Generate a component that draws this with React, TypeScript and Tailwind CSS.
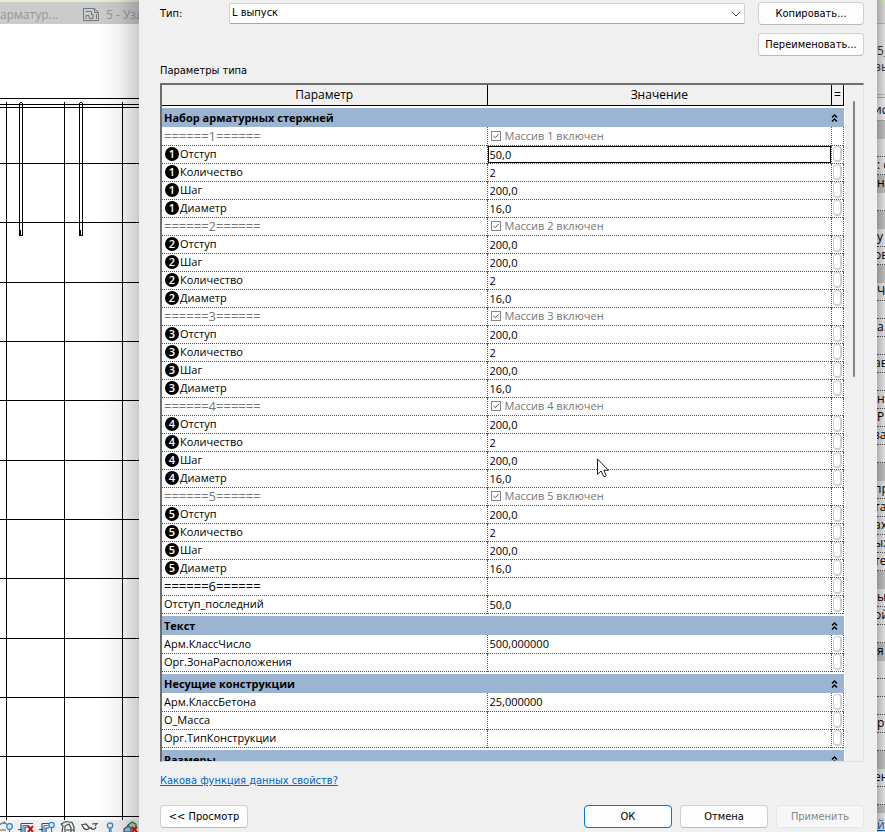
import { useState } from 'react';

interface Param {
  name: string;
  value?: string;
  badge?: number;
  check?: string;
  muted?: boolean;
  active?: boolean;
}

interface Group {
  title: string;
  params: Param[];
}

interface StripRow {
  text?: string;
  dark?: boolean;
}

const GROUPS: Group[] = [
  {
    title: 'Набор арматурных стержней',
    params: [
      { name: '======1======', check: 'Массив 1 включен', muted: true },
      { badge: 1, name: 'Отступ', value: '50,0', active: true },
      { badge: 1, name: 'Количество', value: '2' },
      { badge: 1, name: 'Шаг', value: '200,0' },
      { badge: 1, name: 'Диаметр', value: '16,0' },
      { name: '======2======', check: 'Массив 2 включен', muted: true },
      { badge: 2, name: 'Отступ', value: '200,0' },
      { badge: 2, name: 'Шаг', value: '200,0' },
      { badge: 2, name: 'Количество', value: '2' },
      { badge: 2, name: 'Диаметр', value: '16,0' },
      { name: '======3======', check: 'Массив 3 включен', muted: true },
      { badge: 3, name: 'Отступ', value: '200,0' },
      { badge: 3, name: 'Количество', value: '2' },
      { badge: 3, name: 'Шаг', value: '200,0' },
      { badge: 3, name: 'Диаметр', value: '16,0' },
      { name: '======4======', check: 'Массив 4 включен', muted: true },
      { badge: 4, name: 'Отступ', value: '200,0' },
      { badge: 4, name: 'Количество', value: '2' },
      { badge: 4, name: 'Шаг', value: '200,0' },
      { badge: 4, name: 'Диаметр', value: '16,0' },
      { name: '======5======', check: 'Массив 5 включен', muted: true },
      { badge: 5, name: 'Отступ', value: '200,0' },
      { badge: 5, name: 'Количество', value: '2' },
      { badge: 5, name: 'Шаг', value: '200,0' },
      { badge: 5, name: 'Диаметр', value: '16,0' },
      { name: '======6======', value: '' },
      { name: 'Отступ_последний', value: '50,0' },
    ],
  },
  {
    title: 'Текст',
    params: [
      { name: 'Арм.КлассЧисло', value: '500,000000' },
      { name: 'Орг.ЗонаРасположения', value: '' },
    ],
  },
  {
    title: 'Несущие конструкции',
    params: [
      { name: 'Арм.КлассБетона', value: '25,000000' },
      { name: 'О_Масса', value: '' },
      { name: 'Орг.ТипКонструкции', value: '' },
    ],
  },
  { title: 'Размеры', params: [] },
];

const STRIP: StripRow[] = [
  { dark: true }, {}, { text: ': с' }, { text: 'н', dark: true }, {}, { dark: true },
  { text: 'у' }, { text: 'ов' }, { dark: true }, { text: 'Ч' }, {}, { text: 'а.' }, {},
  { text: 'ав' }, {}, { text: 'н' }, { text: 'Р' }, { text: 'за' }, {}, { dark: true },
  { text: 'пр' }, { text: 'та' }, { text: 'ах' }, { text: 'ых' }, { text: 'те' }, { dark: true },
  { text: 'ы' }, { text: 'ой' }, {}, { text: 'я', dark: true }, {}, {}, {}, { text: 'р' }, {},
  { dark: true }, { text: 'ен' }, {},
];

const GRID_Y = [139, 198, 258, 317, 376, 436, 495, 554, 614, 673, 732, 792];
const GRID_X = [6, 64, 122];
const BARS_X = [19, 79];

const BUTTON =
  'h-[23px] rounded border border-[#d0d0d0] border-b-[#bababa] bg-[#fdfdfd] text-center leading-5 text-black';

function Drawing() {
  return (
    <svg className="block h-full w-full" fill="none" stroke="#000" shapeRendering="crispEdges">
      {[74, 80, 83, ...GRID_Y].map((y) => (
        <line key={y} x1="0" x2="100%" y1={y + 0.5} y2={y + 0.5} />
      ))}
      {GRID_X.map((x) => (
        <line key={x} x1={x + 0.5} x2={x + 0.5} y1="78" y2="796" />
      ))}
      {BARS_X.map((x) => (
        <g key={x}>
          <path d={`M${x + 0.5} 80V211.500H${x + 3.5}V80`} />
          <path d={`M${x + 0.5} 206V211M${x + 1.5} 206V211`} />
          <path d={`M${x + 0.5} 81V79.500L${x + 1.5} 78.500H${x + 2.5}L${x + 3.5} 79.500V81`} />
        </g>
      ))}
    </svg>
  );
}

function ViewIcons() {
  return (
    <svg className="block h-3 w-[139px]" viewBox="0 0 139 12" fill="none" stroke="#5b6770" strokeWidth="1.2">
      <path d="M0 4.500C2 2.500 5 2 7 4.500M4.500 1.500V4M0 10H6" />
      <circle cx="9.500" cy="6.500" r="2.800" fill="#dcecff" stroke="#2a7fd4" />
      <path d="M9.500 9.500V12" stroke="#2a7fd4" />
      <path d="M18 9.500H22M21 3.500H33M21 3.500V12M25 12V7H28" stroke="#37506a" />
      <path d="M23 5.500H29M23 5.500V12" stroke="#2a7fd4" />
      <path d="M28 6L33 12M33 6L28 12" stroke="#c01818" strokeWidth="2" />
      <path d="M39 9.500H43M42 3.500H50M42 3.500V12M46 12V8H49" stroke="#37506a" />
      <path d="M44 5.500H48M44 5.500V12" stroke="#2a7fd4" />
      <circle cx="51.500" cy="5" r="2.700" fill="#dcecff" stroke="#2a7fd4" />
      <path d="M51.500 8V12" stroke="#2a7fd4" />
      <path d="M61 4L66 1.500L72 2.500L74 7V12M61 4L63 6L62 12M65 12V6L69 4L71 8V12M66 10H74" stroke="#414b50" />
      <path d="M81 5L86 4L90 8.500M92 4L97 3.500L95 6M82 4.500C83 8 84 10 87 9.500C89 9 90 8 91 7.500C92 10 95 10 96 7" stroke="#414b50" />
      <circle cx="110" cy="5.500" r="2.700" fill="#dcecff" stroke="#2a7fd4" />
      <path d="M109.500 8.500V12M111 8.500V12" stroke="#2a7fd4" />
      <path d="M128 5L132 2L136 4V8L132 9L128 8Z" fill="#a9d8a0" stroke="#277044" />
      <path d="M124 9L128 6L131 8V12H124Z" fill="#9cc4ea" stroke="#37506a" />
      <path d="M132 7L137 12M137 7L132 12" stroke="#c01818" strokeWidth="2" />
    </svg>
  );
}

function CanvasPane() {
  return (
    <section className="relative flex w-[139px] shrink-0 flex-col overflow-hidden bg-white">
      <div className="h-0.5 shrink-0 bg-[#e3efd2]" />
      <div className="flex h-[22px] shrink-0 items-center whitespace-nowrap bg-[#cbcbcb] pt-1 text-[12px] text-[#979797]">
        <span className="w-[83px] shrink-0">арматур...</span>
        <svg className="mr-[7px] h-3.5 w-4 shrink-0" viewBox="0 0 16 14" fill="none" stroke="#6f7980">
          <path d="M.5.5H11.500L15.500 4.500V12.500H.5ZM11.500.5V4.500H15.500M13.500 6V11" />
          <path d="M3 3.500H8.500V6M3 11V7.500H6V10.500H10V6.500H8" />
        </svg>
        <span>5 - Узлы</span>
      </div>
      <div className="min-h-0 flex-1">
        <Drawing />
      </div>
      <div className="h-3 shrink-0 overflow-hidden bg-[#f0f0f0]">
        <ViewIcons />
      </div>
      <div className="pointer-events-none absolute inset-y-0 right-0 w-10 bg-linear-to-r from-black/0 via-black/5 to-black/20" />
    </section>
  );
}

function PropertiesStrip() {
  return (
    <aside className="relative flex w-2 shrink-0 flex-col overflow-hidden whitespace-nowrap bg-[#dedede] text-[12px] text-black">
      <div className="h-1 shrink-0 bg-[#cfdcb8]" />
      <div className="h-5 shrink-0 border-b border-[#b4b4b4] bg-[#d2d2d2]" />
      <div className="flex h-[71px] shrink-0 flex-col justify-center border-b border-[#b4b4b4] leading-4 text-[#333]">
        <span>5_</span>
        <span className="-indent-[3px]">вы</span>
      </div>
      <div className="mt-0.5 h-6 shrink-0 border-y border-[#a5a5a5] bg-[#e6e6e6] leading-6 -indent-[3px]">ис</div>
      {STRIP.map((row, i) => (
        <div
          key={i}
          className={`h-[18px] shrink-0 leading-4 ${
            row.dark ? 'bg-[#b9b9b9]' : 'border-b border-dotted border-[#555] bg-[#dedede]'
          } ${row.text && /^[а-я]{2}$/.test(row.text) ? '-indent-[3px]' : ''}`}
        >
          {row.text}
        </div>
      ))}
      <div className="h-2 shrink-0 bg-[#b9b9b9]" />
      <a href="#help" className="pt-1 leading-4 text-[#0a5ba8] underline">йства</a>
      <div className="pointer-events-none absolute inset-0 bg-linear-to-r from-black/20 to-black/0" />
    </aside>
  );
}

function Chevrons() {
  return (
    <svg className="block h-2 w-[7px]" viewBox="0 0 7 8" fill="none" stroke="#000" strokeWidth="1.4">
      <path d="M1 3.500L3.500 1L6 3.500M1 7.500L3.500 5L6 7.500" />
    </svg>
  );
}

function ParamRow({ param, id }: { param: Param; id: string }) {
  const [value, setValue] = useState(param.value ?? '');
  const [checked, setChecked] = useState(true);
  const isRuler = param.name.startsWith('=');

  return (
    <tr className="h-[18px] border-b border-dotted border-[#555]">
      <th
        scope="row"
        className={`border-r border-dotted border-[#555] p-0 pl-0.5 text-left font-normal ${
          param.muted ? 'text-[#777]' : 'text-black'
        }`}
      >
        <div className="flex h-[17px] items-center whitespace-nowrap leading-4">
          {param.badge && (
            <span className="mr-px ml-px flex h-3.5 w-3.5 shrink-0 items-center justify-center rounded-full bg-black text-[11px] leading-3 font-semibold text-white">
              {param.badge}
            </span>
          )}
          <label htmlFor={id} className={isRuler ? 'text-[13px]' : ''}>{param.name}</label>
        </div>
      </th>
      <td className="border-r border-dotted border-[#555] p-0">
        {param.check ? (
          <label className="flex h-[17px] items-center gap-1 pl-[3px] leading-4 text-[#777]">
            <span className="relative block h-2.5 w-2.5">
              <input
                id={id}
                type="checkbox"
                checked={checked}
                onChange={(e) => setChecked(e.target.checked)}
                className="block h-2.5 w-2.5 appearance-none border border-[#858585] bg-white"
              />
              {checked && (
                <svg className="pointer-events-none absolute inset-0 h-2.5 w-2.5" viewBox="0 0 10 10" fill="none" stroke="#555">
                  <path d="M2.500 4.800L4.300 6.700L7.700 3.200" />
                </svg>
              )}
            </span>
            {param.check}
          </label>
        ) : (
          <input
            id={id}
            value={value}
            onChange={(e) => setValue(e.target.value)}
            className={`block h-[17px] w-full bg-white p-0 outline-none ${
              param.active ? 'border border-black pl-px' : 'pl-0.5'
            }`}
          />
        )}
      </td>
      <td className="border-r border-dotted border-[#555] p-0">
        {!param.check && (
          <button
            aria-label={`Связать: ${param.name}`}
            className="ml-px block h-4 w-[9px] rounded border border-r-2 border-b-2 border-[#cfcfcf] bg-white"
          />
        )}
      </td>
    </tr>
  );
}

function ParamTable() {
  return (
    <table className="w-full table-fixed border-collapse bg-white font-['Open_Sans',sans-serif] text-[11px]">
      <colgroup>
        <col className="w-[325px]" />
        <col />
        <col className="w-3" />
      </colgroup>
      <thead>
        <tr className="h-5 border-b border-black bg-[#f0f0f0] text-[12px] leading-4">
          <th className="border-r border-black p-0 font-normal">Параметр</th>
          <th className="border-r border-black p-0 font-normal">Значение</th>
          <th className="border-r border-black p-0 font-normal">=</th>
        </tr>
      </thead>
      {GROUPS.map((group, g) => (
        <tbody key={group.title}>
          <tr className="h-[3px]">
            <td colSpan={3} className="p-0" />
          </tr>
          <tr className="h-[19px] bg-[#9bb4d1]">
            <th colSpan={3} className="p-0">
              <div className="flex h-[19px] items-center justify-between pr-1.5 pl-0.5 leading-4 font-bold">
                <span>{group.title}</span>
                <button aria-label={`Свернуть: ${group.title}`}>
                  <Chevrons />
                </button>
              </div>
            </th>
          </tr>
          {group.params.map((param, i) => (
            <ParamRow key={i} id={`param-${g}-${i}`} param={param} />
          ))}
        </tbody>
      ))}
    </table>
  );
}

function TypeDialog() {
  return (
    <main className="relative flex min-w-0 flex-1 flex-col bg-[#f0f0f0] pr-[13px] pl-[21px] font-['DejaVu_Sans_Condensed','Liberation_Sans',sans-serif] text-[11px] text-black">
      <div className="flex items-start pt-0.5">
        <label htmlFor="type" className="w-[69px] pt-1 leading-4">Тип:</label>
        <div className="relative mt-px mr-[13px] flex-1">
          <select
            id="type"
            className="block h-[21px] w-full appearance-none rounded-xs border border-[#d0d0d0] border-b-[#a8a8a8] bg-white pl-0.5"
          >
            <option>L выпуск</option>
          </select>
          <svg className="pointer-events-none absolute top-2 right-1 h-1.5 w-2.5" viewBox="0 0 10 6" fill="none" stroke="#444">
            <path d="M.8.8L5 5L9.200.8" />
          </svg>
        </div>
        <div className="flex w-[106px] flex-col gap-2">
          <button className={BUTTON}>Копировать...</button>
          <button className={BUTTON}>Переименовать...</button>
        </div>
      </div>

      <h2 className="pt-[7px] pb-1 leading-4">Параметры типа</h2>

      <div className="flex min-h-0 flex-1 overflow-hidden border-t-2 border-r border-b border-l-2 border-t-[#6d6d6d] border-r-[#e0e0e0] border-b-[#e0e0e0] border-l-[#6d6d6d]">
        <div className="min-w-0 flex-1 overflow-hidden">
          <ParamTable />
        </div>
        <div className="w-[19px] shrink-0 border-l border-white pt-4 pl-2">
          <div className="h-[276px] w-0.5 rounded-full bg-[#858585]" />
        </div>
      </div>

      <a href="#help" className="self-start pt-[11px] leading-4 text-[#0066cc] underline">
        Какова функция данных свойств?
      </a>

      <div className="flex gap-2 pt-4 pb-1">
        <button className={`${BUTTON} mr-auto w-[88px]`}>&lt;&lt; Просмотр</button>
        <button className="h-[23px] w-[88px] rounded border border-[#0078d4] bg-[#fdfdfd] leading-5">ОК</button>
        <button className={`${BUTTON} w-[88px]`}>Отмена</button>
        <button disabled className="h-[23px] w-[88px] rounded border border-[#e6e6e6] bg-[#f7f7f7] leading-5 text-[#888]">
          Применить
        </button>
      </div>
    </main>
  );
}

export default function App() {
  return (
    <div className="relative flex h-screen overflow-hidden font-['Open_Sans',sans-serif]">
      <CanvasPane />
      <TypeDialog />
      <PropertiesStrip />
      <svg className="pointer-events-none absolute top-[458px] left-[597px] h-5 w-3" viewBox="0 0 12 20" fill="#fff" stroke="#1c1c2a">
        <path d="M.5.900V16.300L4.100 13L6.600 18.300Q8 19.200 9.200 17.600L6.900 12.300H11.400Z" />
      </svg>
    </div>
  );
}
